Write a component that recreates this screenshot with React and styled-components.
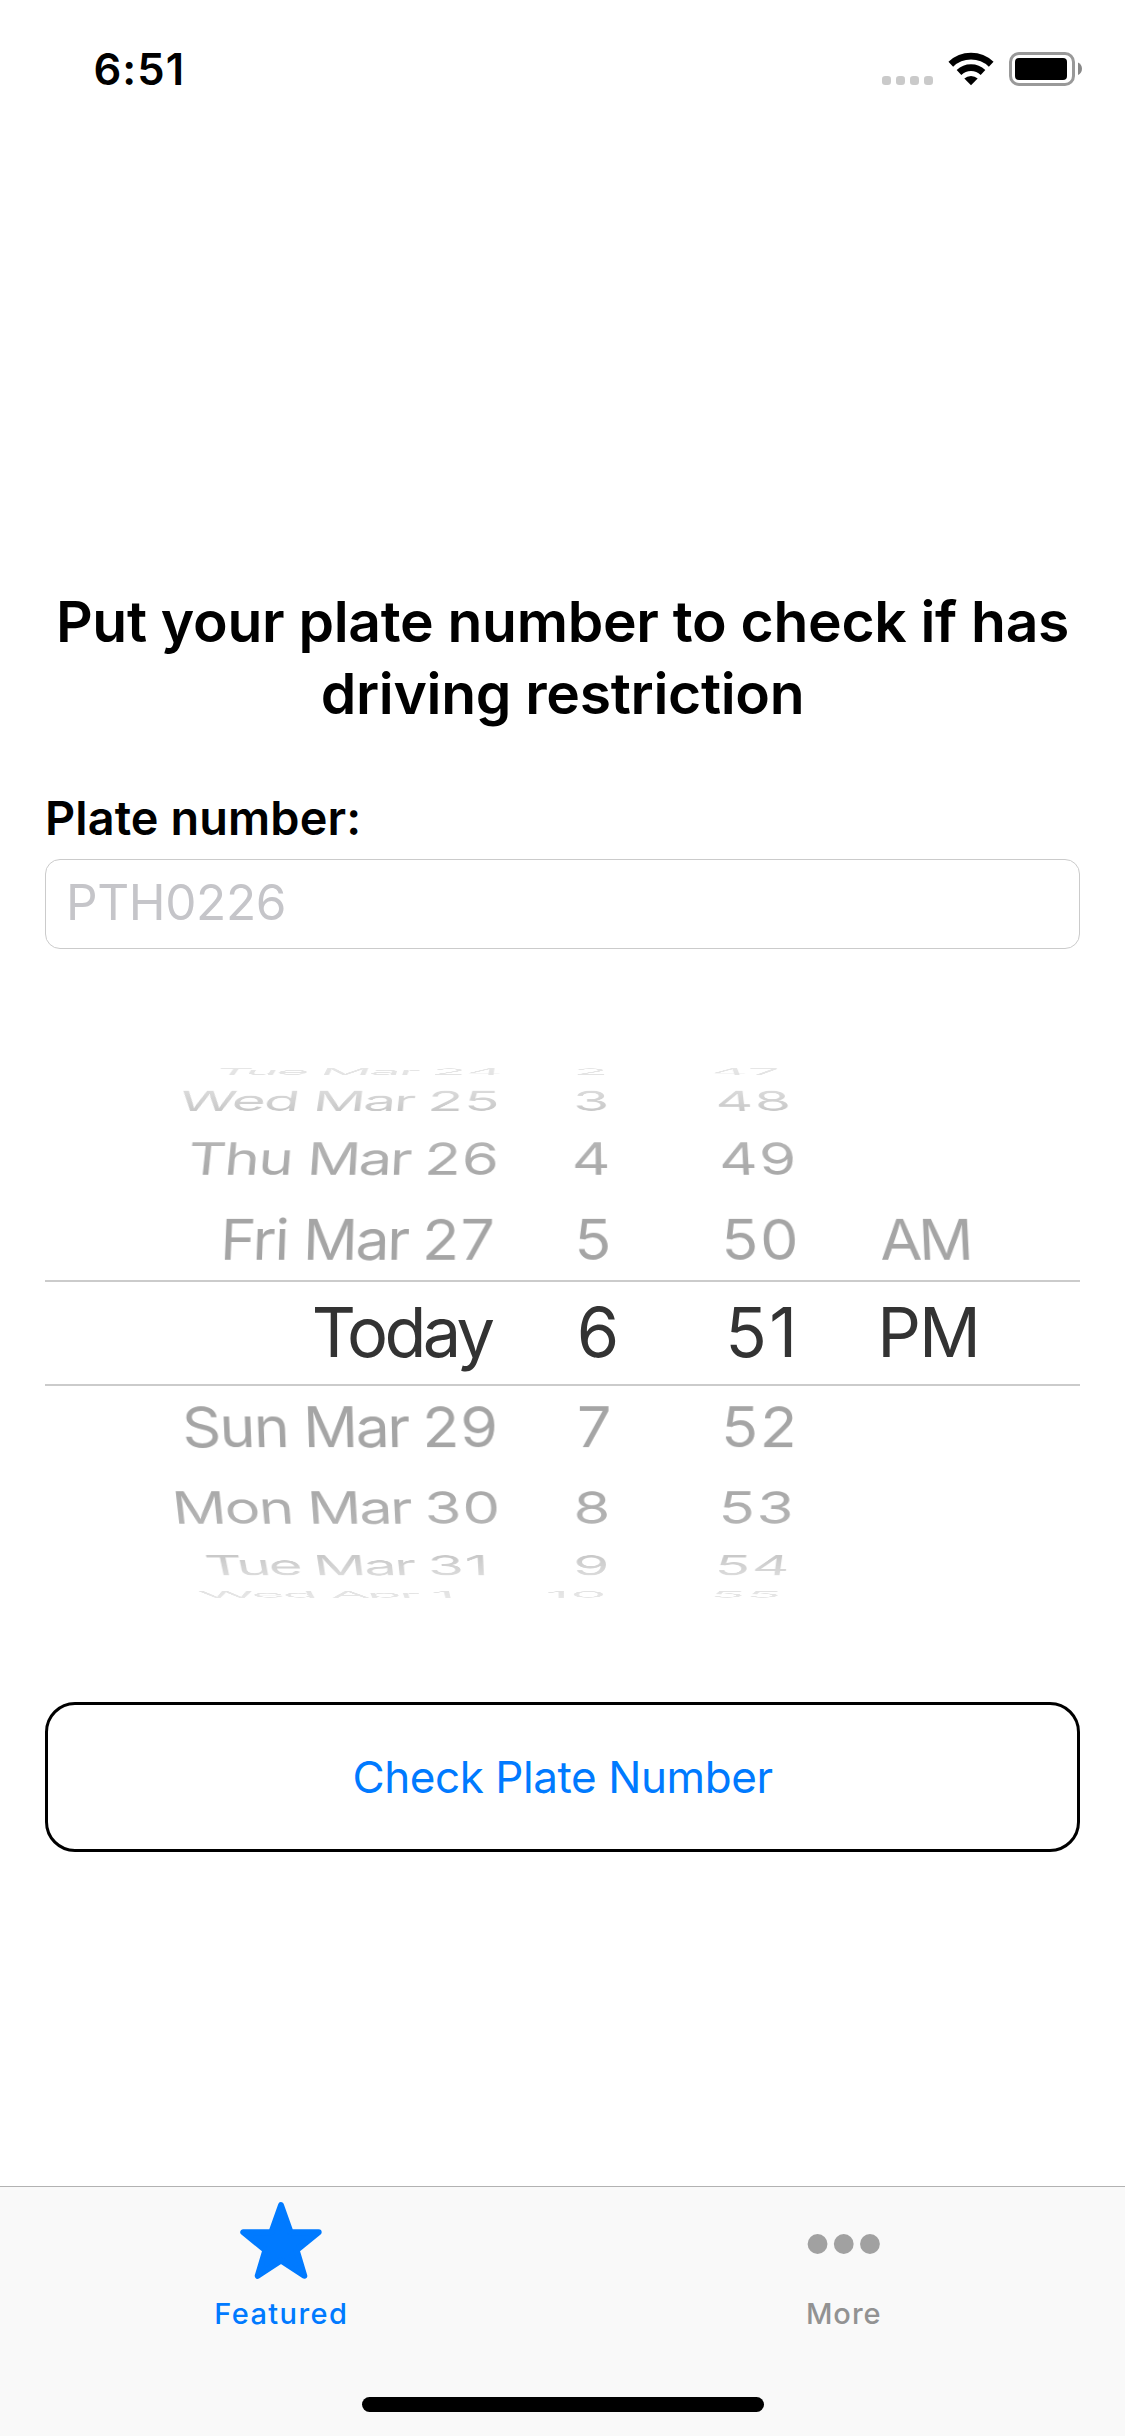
import React from "react";
import styled, { createGlobalStyle } from "styled-components";

const GlobalStyle = createGlobalStyle`
  *, *::before, *::after { box-sizing: border-box; }
  body {
    margin: 0;
    background: #fff;
    color: #000;
    font-family: Inter, "Liberation Sans", sans-serif;
  }
`;

const Screen = styled.div`
  width: 1125px;
  height: 2436px;
  display: flex;
  flex-direction: column;
  background: #fff;
  overflow: hidden;
`;

const StatusBar = styled.header`
  height: 138px;
  flex: none;
  display: flex;
  align-items: center;
  justify-content: space-between;
  padding: 0 43px 0 93.5px;
`;

const Clock = styled.span`
  font-size: 43.5px;
  font-weight: 600;
  line-height: 60px;
  letter-spacing: 1.05px;
`;

const StatusIcons = styled.svg`
  display: block;
  width: 200px;
  height: 34px;
`;

const Content = styled.main`
  flex: 1;
  display: flex;
  flex-direction: column;
  padding: 448px 45px 0;
`;

const Title = styled.h1`
  height: 143px;
  margin: 0;
  font-size: 57px;
  font-weight: 600;
  line-height: 71.5px;
  letter-spacing: -0.3px;
  text-align: center;
`;

const FieldLabel = styled.label`
  margin-top: 59px;
  height: 60px;
  font-size: 46.8px;
  font-weight: 600;
  line-height: 60px;
  letter-spacing: 0.12px;
`;

const PlateInput = styled.input`
  display: block;
  width: 100%;
  height: 90px;
  margin-top: 11px;
  padding: 0 20px 4px;
  border: 1px solid #cbcbcb;
  border-radius: 15px;
  outline: none;
  background: #fff;
  font-family: inherit;
  font-size: 49.5px;
  letter-spacing: -0.37px;
  &::placeholder {
    color: #c5c5c9;
    opacity: 1;
  }
`;

const Picker = styled.div`
  display: grid;
  height: 530px;
  margin-top: 119px;
  align-items: center;
  overflow: hidden;
`;

const Wheel = styled.div`
  grid-area: 1 / 1;
  display: grid;
  align-items: center;
  height: 530px;
  overflow: hidden;
  perspective: 2800px;
  perspective-origin: 50% 50%;
  mask-image: linear-gradient(
    to bottom,
    rgba(0, 0, 0, 0.28) 0,
    rgba(0, 0, 0, 0.4) 22px,
    rgba(0, 0, 0, 0.6) 42px,
    rgba(0, 0, 0, 0.82) 73px,
    rgba(0, 0, 0, 0.95) 106px,
    #000 135px,
    #000 395px,
    rgba(0, 0, 0, 0.95) 424px,
    rgba(0, 0, 0, 0.82) 457px,
    rgba(0, 0, 0, 0.6) 488px,
    rgba(0, 0, 0, 0.4) 508px,
    rgba(0, 0, 0, 0.28) 530px
  );
`;

const WheelRow = styled.div`
  grid-area: 1 / 1;
  display: grid;
  grid-template-columns: 454px 112.5px 268.5px 1fr;
  height: 96px;
  font-size: 61px;
  line-height: 96px;
  color: #a5a5a5;
  white-space: pre;
  transform: translateZ(-291px) rotateX(${(p) => p.$step * -18.9}deg) translateZ(291px);
`;

const SelectedRow = styled.div`
  grid-area: 1 / 1;
  display: grid;
  grid-template-columns: 446.5px 127.7px 258.1px 1fr;
  height: 106px;
  border: solid #cbcbcb;
  border-width: 2px 0;
  font-size: 68.5px;
  line-height: 102px;
  color: #333;
`;

const DateCell = styled.div`
  display: flex;
  justify-content: flex-end;
  letter-spacing: ${(p) => (p.$selected ? "-3.6px" : "-1.7px")};
`;

const Weekday = styled.span`
  letter-spacing: ${(p) => (p.$tight ? "-2.7px" : "-1.7px")};
`;

const Month = styled.span`
  letter-spacing: -2.4px;
`;

const DayNumber = styled.span`
  width: 77.4px;
  letter-spacing: 1px;
`;

const HourCell = styled.div`
  text-align: right;
  letter-spacing: ${(p) => (p.$wide ? "1.8px" : "0")};
`;

const MinuteCell = styled.div`
  padding-left: ${(p) => (p.$selected ? "106.1px" : "110.8px")};
  letter-spacing: ${(p) => (p.$selected ? "2.4px" : "1.8px")};
`;

const PeriodCell = styled.div`
  padding-left: ${(p) => (p.$selected ? "0" : "1.5px")};
  letter-spacing: ${(p) => (p.$selected ? "-2px" : "-3px")};
`;

const CheckButton = styled.button`
  height: 150px;
  margin: 104px 0 0;
  padding: 0;
  border: 3px solid #000;
  border-radius: 30px;
  background: #fff;
  color: #007aff;
  font-family: inherit;
  font-size: 44px;
  line-height: 60px;
  letter-spacing: -0.43px;
`;

const TabBar = styled.nav`
  height: 250px;
  flex: none;
  display: flex;
  flex-direction: column;
  border-top: 1px solid #b2b2b2;
  background: #f9f9f9;
`;

const Tabs = styled.div`
  display: flex;
  height: 210px;
`;

const Tab = styled.a`
  flex: 1;
  display: flex;
  flex-direction: column;
  align-items: center;
  padding-top: 9px;
  color: ${(p) => (p.$active ? "#007aff" : "#929292")};
  font-size: 29px;
  font-weight: 450;
  line-height: 36px;
  letter-spacing: ${(p) => (p.$active ? "1.4px" : "1px")};
`;

const TabIcon = styled.svg`
  display: block;
  width: 90px;
  height: 90px;
  margin-bottom: 10px;
`;

const HomeIndicator = styled.div`
  width: 402px;
  height: 15px;
  margin-left: 362px;
  border-radius: 7.5px;
  background: #000;
`;

const rows = [
  { step: -4, weekday: "Tue ", month: "Mar ", day: "24", hour: "2", minute: "47" },
  { step: -3, weekday: "Wed ", month: "Mar ", day: "25", hour: "3", minute: "48" },
  { step: -2, weekday: "Thu ", month: "Mar ", day: "26", hour: "4", minute: "49" },
  { step: -1, weekday: "Fri ", month: "Mar ", day: "27", hour: "5", minute: "50", period: "AM" },
  { step: 1, weekday: "Sun ", month: "Mar ", day: "29", hour: "7", minute: "52" },
  { step: 2, weekday: "Mon ", month: "Mar ", day: "30", hour: "8", minute: "53" },
  { step: 3, weekday: "Tue ", month: "Mar ", day: "31", hour: "9", minute: "54" },
  { step: 4, weekday: "Wed ", month: "Apr ", day: "1", hour: "10", minute: "55" },
];

function StatusGlyphs() {
  return (
    <StatusIcons viewBox="882 52 200 34" aria-hidden="true">
      {[882, 896, 910, 924].map((x) => (
        <rect key={x} x={x} y="76" width="9" height="9" rx="3.2" fill="#cacaca" />
      ))}
      <g fill="none" stroke="#000" strokeWidth="6.8">
        <path d="M950.8 64.2 A29.3 29.3 0 0 1 991.2 64.2" />
        <path d="M959 72.4 A17.6 17.6 0 0 1 983 72.4" />
      </g>
      <path d="M964.3 78.6 A10 10 0 0 1 977.7 78.6 L971 85.2 Z" fill="#000" />
      <rect x="1010.5" y="53.5" width="63" height="31" rx="8.5" fill="none" stroke="#999" strokeWidth="3" />
      <rect x="1015" y="58" width="52" height="22" rx="4" fill="#000" />
      <path d="M1078 62.5 C1080.5 63.5 1082 66 1082 68.8 C1082 71.6 1080.5 74 1078 75 Z" fill="#888" />
    </StatusIcons>
  );
}

export default function App() {
  return (
    <>
      <GlobalStyle />
      <Screen>
        <StatusBar>
          <Clock>6:51</Clock>
          <StatusGlyphs />
        </StatusBar>

        <Content>
          <Title>
            Put your plate number to check if has
            <br />
            driving restriction
          </Title>
          <FieldLabel htmlFor="plate">Plate number:</FieldLabel>
          <PlateInput id="plate" placeholder="PTH0226" />

          <Picker>
            <Wheel>
              {rows.map((r) => (
                <WheelRow key={r.step} $step={r.step}>
                  <DateCell>
                    <Weekday $tight={r.weekday === "Tue "}>{r.weekday}</Weekday>
                    <Month>{r.month}</Month>
                    <DayNumber>{r.day}</DayNumber>
                  </DateCell>
                  <HourCell $wide={r.hour.length > 1}>{r.hour}</HourCell>
                  <MinuteCell>{r.minute}</MinuteCell>
                  <PeriodCell>{r.period}</PeriodCell>
                </WheelRow>
              ))}
            </Wheel>
            <SelectedRow>
              <DateCell $selected>Today</DateCell>
              <HourCell>6</HourCell>
              <MinuteCell $selected>51</MinuteCell>
              <PeriodCell $selected>PM</PeriodCell>
            </SelectedRow>
          </Picker>

          <CheckButton type="button">Check Plate Number</CheckButton>
        </Content>

        <TabBar>
          <Tabs>
            <Tab $active>
              <TabIcon viewBox="236 2196 90 90" aria-hidden="true">
                <path
                  d="M281 2205.2 L290.6 2232.2 L318.7 2232.2 L296.6 2250.2 L304.3 2275.8 L281 2260.6 L257.7 2275.8 L265.4 2250.2 L243.3 2232.2 L271.4 2232.2 Z"
                  fill="#007aff"
                  stroke="#007aff"
                  strokeWidth="6"
                  strokeLinejoin="round"
                />
              </TabIcon>
              Featured
            </Tab>
            <Tab>
              <TabIcon viewBox="798.75 2196 90 90" fill="#a1a1a1" aria-hidden="true">
                <circle cx="817.3" cy="2244" r="9.9" />
                <circle cx="843.5" cy="2244" r="9.9" />
                <circle cx="869.7" cy="2244" r="9.9" />
              </TabIcon>
              More
            </Tab>
          </Tabs>
          <HomeIndicator />
        </TabBar>
      </Screen>
    </>
  );
}
